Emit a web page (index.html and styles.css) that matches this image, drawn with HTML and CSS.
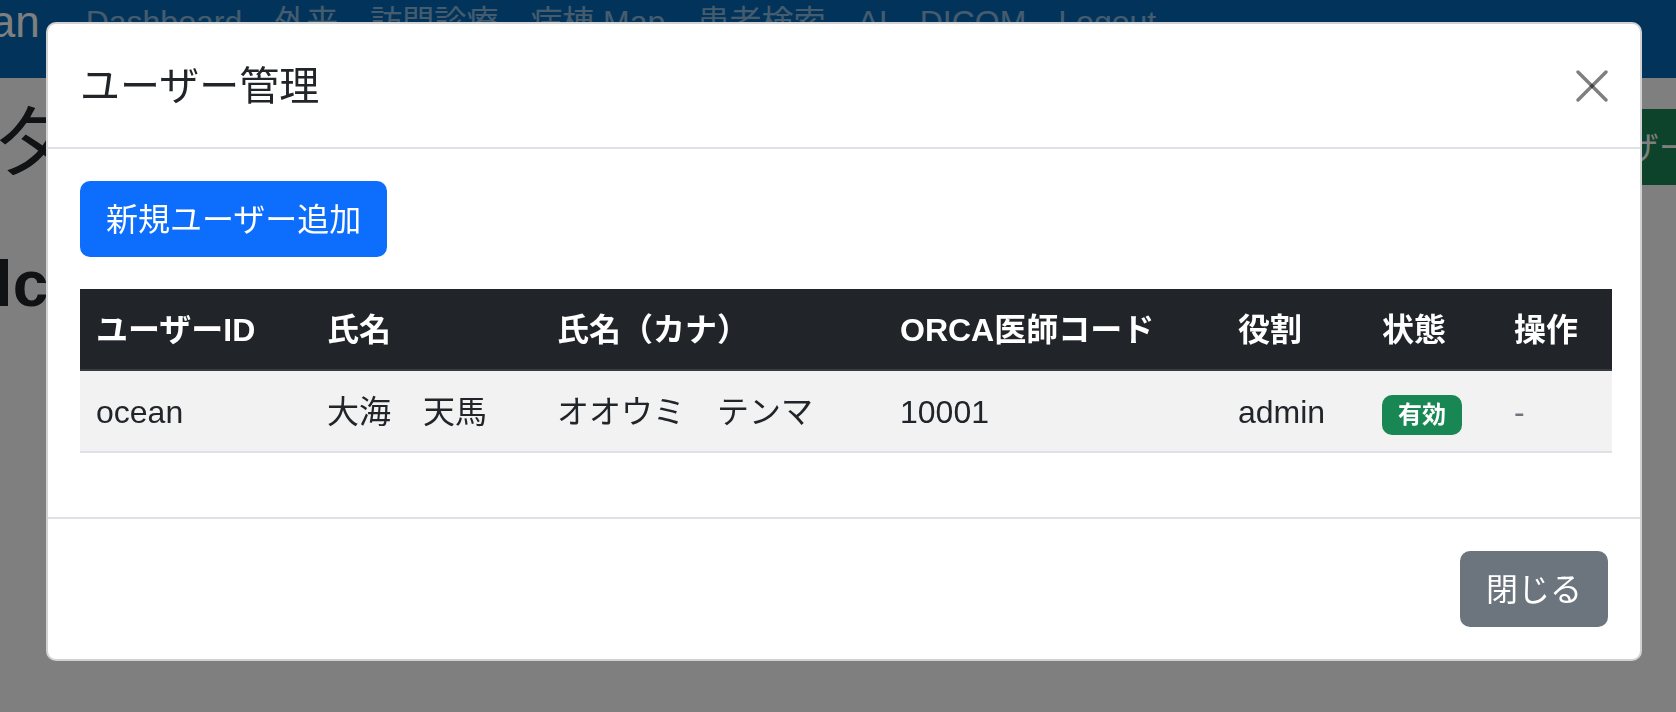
FILE: index.html
```html
<!DOCTYPE html>
<html lang="ja">
<head>
    <meta charset="UTF-8">
    <meta name="viewport" content="width=device-width, initial-scale=1.0">
    <title>ユーザー管理</title>
    <link rel="stylesheet" href="styles.css">
</head>
<body>
    <nav class="navbar">
        <a class="navbar-brand" href="#">Ocean</a>
        <a class="nav-link" href="#">Dashboard</a>
        <a class="nav-link" href="#">外来</a>
        <a class="nav-link" href="#">訪問診療</a>
        <a class="nav-link" href="#">病棟 Map</a>
        <a class="nav-link" href="#">患者検索</a>
        <a class="nav-link" href="#">AI</a>
        <a class="nav-link" href="#">DICOM</a>
        <a class="nav-link" href="#">Logout</a>
    </nav>

    <div class="main">
        <div class="page-head">
            <h1>ダッシュボード</h1>
            <button class="btn btn-success">ユーザー管理</button>
        </div>
        <h2 class="welcome">Welcome</h2>
    </div>

    <div class="modal-backdrop"></div>

    <div class="modal">
        <div class="modal-content">
            <div class="modal-header">
                <h5 class="modal-title">ユーザー管理</h5>
                <button class="btn-close" aria-label="Close">
                    <svg width="32" height="32" viewBox="0 0 16 16">
                        <line x1="1" y1="1" x2="15" y2="15" />
                        <line x1="15" y1="1" x2="1" y2="15" />
                    </svg>
                </button>
            </div>
            <div class="modal-body">
                <button class="btn btn-primary">新規ユーザー追加</button>
                <table class="user-table">
                    <thead>
                        <tr>
                            <th class="col-id">ユーザーID</th>
                            <th class="col-name">氏名</th>
                            <th class="col-kana">氏名（カナ）</th>
                            <th class="col-orca">ORCA医師コード</th>
                            <th class="col-role">役割</th>
                            <th class="col-status">状態</th>
                            <th class="col-ops">操作</th>
                        </tr>
                    </thead>
                    <tbody>
                        <tr>
                            <td>ocean</td>
                            <td>大海　天馬</td>
                            <td>オオウミ　テンマ</td>
                            <td>10001</td>
                            <td>admin</td>
                            <td><span class="badge">有効</span></td>
                            <td class="muted">-</td>
                        </tr>
                    </tbody>
                </table>
            </div>
            <div class="modal-footer">
                <button class="btn btn-secondary">閉じる</button>
            </div>
        </div>
    </div>
</body>
</html>
```

FILE: styles.css
```css
* {
    box-sizing: border-box;
}
body {
    margin: 0;
    font-family: "Liberation Sans", "Noto Sans CJK JP", sans-serif;
    font-size: 32px;
    line-height: 48px;
    color: #212529;
    background: #fff;
    overflow: hidden;
    height: 712px;
}

/* page behind the modal */
.navbar {
    display: flex;
    align-items: flex-end;
    height: 78px;
    padding-bottom: 16px;
    background: #0469b6;
}
.navbar-brand {
    margin-left: -90px;
    margin-right: 30px;
    padding: 10px 0;
    font-size: 44px;
    line-height: 60px;
    color: #fff;
    text-decoration: none;
    white-space: nowrap;
}
.nav-link {
    padding: 16px;
    color: rgba(255, 255, 255, 0.55);
    text-decoration: none;
    white-space: nowrap;
}
.page-head {
    display: flex;
    justify-content: space-between;
    align-items: flex-start;
    margin: 16px -105px 0 -5px;
}
.page-head h1 {
    margin: 0 0 16px;
    font-size: 80px;
    line-height: 96px;
    font-weight: 400;
    white-space: nowrap;
}
.btn {
    display: inline-block;
    padding: 13px 24px 11px;
    border: 2px solid transparent;
    border-radius: 10px;
    font-family: inherit;
    font-size: 32px;
    line-height: 48px;
    color: #fff;
    cursor: pointer;
    white-space: nowrap;
}
.btn-success {
    margin-top: 15px;
    background: #198754;
    border-color: #198754;
}
.welcome {
    margin: 40px 0 0 -100px;
    font-size: 64px;
    line-height: 77px;
    font-weight: 700;
    white-space: nowrap;
}

/* modal */
.modal-backdrop {
    position: fixed;
    inset: 0;
    background: rgba(0, 0, 0, 0.5);
}
.modal {
    position: fixed;
    inset: 0;
    padding: 22px 0 0 46px;
}
.modal-content {
    width: 1596px;
    background: #fff;
    border: 2px solid rgba(0, 0, 0, 0.175);
    border-radius: 10px;
}
.modal-header {
    display: flex;
    align-items: center;
    justify-content: space-between;
    padding: 32px 32px 31px;
    border-bottom: 2px solid #dee2e6;
}
.modal-title {
    margin: 0;
    font-size: 40px;
    line-height: 60px;
    font-weight: 400;
}
.btn-close {
    display: flex;
    padding: 0;
    border: none;
    background: none;
    cursor: pointer;
}
.btn-close line {
    stroke: #000;
    stroke-opacity: 0.5;
    stroke-width: 1.7;
    stroke-linecap: round;
}
.modal-body {
    padding: 32px;
}
.btn-primary {
    margin-bottom: 32px;
    background: #0d6efd;
    border-color: #0d6efd;
}
.btn-secondary {
    margin: 8px;
    background: #6c757d;
    border-color: #6c757d;
}
.user-table {
    width: 100%;
    margin-bottom: 32px;
    border-collapse: collapse;
    table-layout: fixed;
}
.user-table th {
    padding: 17px 16px 15px;
    text-align: left;
    font-weight: 700;
    color: #fff;
    background: #212529;
    border-bottom: 2px solid #373b3e;
    white-space: nowrap;
}
.user-table td {
    padding: 17px 16px 15px;
    background: #f2f2f2;
    border-bottom: 2px solid #dee2e6;
    white-space: nowrap;
}
.col-id { width: 231px; }
.col-name { width: 230px; }
.col-kana { width: 343px; }
.col-orca { width: 338px; }
.col-role { width: 144px; }
.col-status { width: 132px; }
.col-ops { width: 114px; }
.badge {
    display: inline-block;
    padding: 8px 16px;
    font-size: 24px;
    line-height: 24px;
    font-weight: 700;
    color: #fff;
    background: #198754;
    border-radius: 10px;
}
.muted {
    color: #6c757d;
}
.modal-footer {
    display: flex;
    justify-content: flex-end;
    padding: 24px;
    border-top: 2px solid #dee2e6;
}
```
